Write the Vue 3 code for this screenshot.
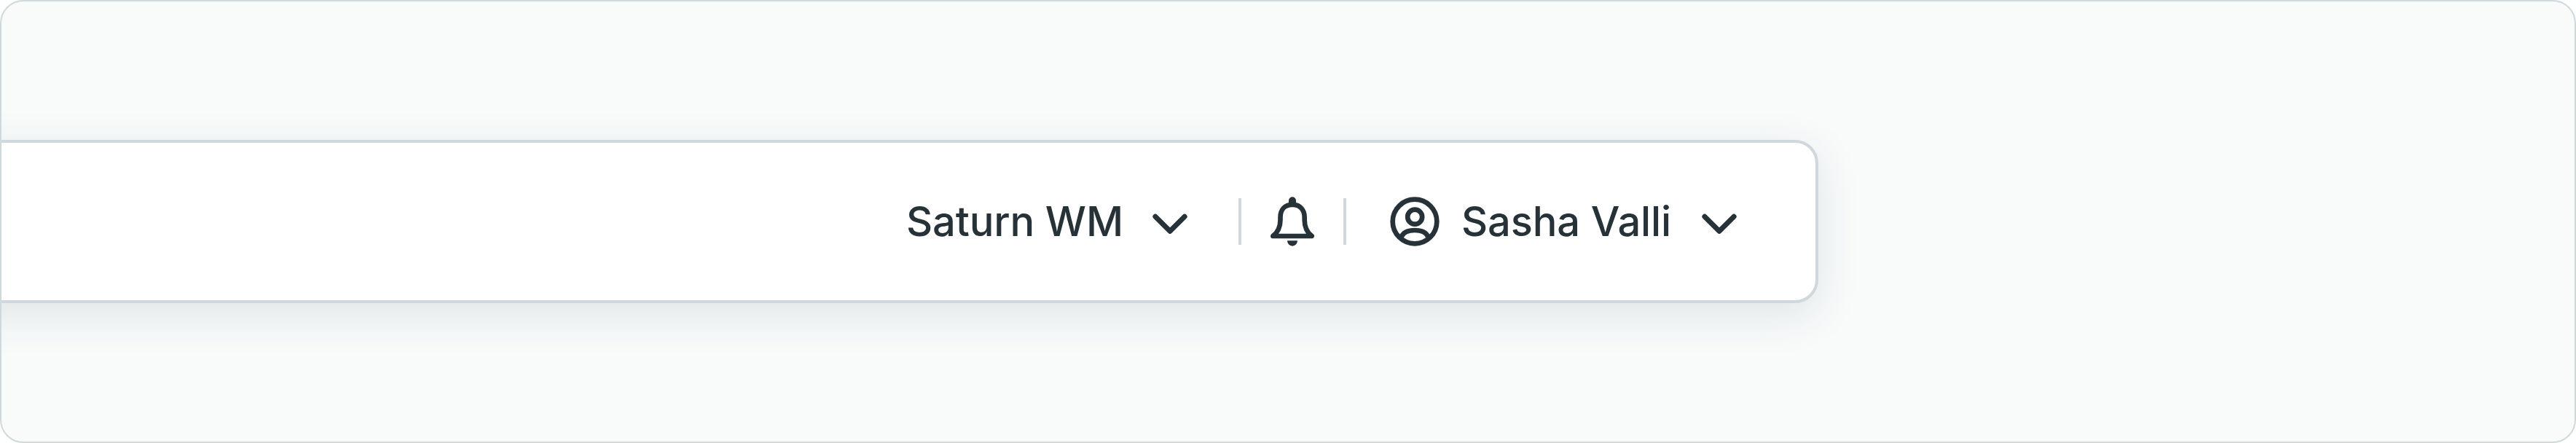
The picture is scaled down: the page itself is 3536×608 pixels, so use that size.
<script setup>
const workspace = 'Saturn WM'
const user = 'Sasha Valli'
</script>

<template>
  <main class="canvas">
    <header class="bar">
      <button class="menu">
        <span class="label workspace">{{ workspace }}</span>
        <svg class="chevron" viewBox="0 0 56 36"><path d="M7.9 7.2 28 27.3 48.1 7.2" /></svg>
      </button>
      <span class="divider"></span>
      <button class="bell-button" aria-label="Notifications">
        <svg class="bell" viewBox="246 54 192 216">
          <path class="line" d="M262 222C280 208 292.500 185 292.500 155V145C292.500 112 312 92.500 342 92.500S392 112 392 145V155C392 185 404 208 422 222Z" />
          <path class="solid" d="M327 88V76a15 15 0 0 1 30 0v12ZM321 241h42a21 22 0 0 1-42 0Z" />
        </svg>
      </button>
      <span class="divider"></span>
      <button class="menu account">
        <svg class="avatar" viewBox="78 53 216 216">
          <circle cx="186" cy="161" r="91" />
          <circle cx="186.500" cy="142" r="30" />
          <path d="M131 224C139 205 160 197 186 197S233 205 241 224" />
        </svg>
        <span class="label user">{{ user }}</span>
        <svg class="chevron" viewBox="0 0 56 36"><path d="M7.900 7.200 28 27.300 48.100 7.200" /></svg>
      </button>
    </header>
  </main>
</template>

<style>
body {
  background: #fff;
}
</style>

<style scoped>
.canvas {
  box-sizing: border-box;
  width: 3536px;
  height: 608px;
  padding-top: 190px;
  border: 2px solid #cfd8dd;
  border-radius: 32px;
  background: #f8fbfa;
  overflow: hidden;
}
.bar {
  box-sizing: border-box;
  display: flex;
  align-items: center;
  justify-content: flex-end;
  width: 2694px;
  height: 224px;
  margin-left: -200px;
  padding-right: 104px;
  border: 4px solid #cfd8dd;
  border-radius: 32px;
  background: #fff;
  box-shadow: 0 16px 60px rgba(48, 50, 80, 0.115);
}
button {
  display: flex;
  align-items: center;
  padding: 0;
  border: 0;
  background: none;
  color: #263238;
}
.menu {
  margin-right: 66px;
}
.account {
  margin: 0 0 0 58px;
}
.label {
  font: 500 56px/80px Inter, sans-serif;
  letter-spacing: -0.12px;
  text-align: left;
  white-space: nowrap;
}
.workspace {
  width: 334px;
}
.user {
  width: 326px;
  margin-left: 28px;
}
svg {
  display: block;
  flex: none;
}
.chevron {
  width: 56px;
  height: 36px;
  margin-top: 8px;
  fill: none;
  stroke: #263238;
  stroke-width: 7;
  stroke-linecap: round;
  stroke-linejoin: round;
}
.divider {
  width: 4px;
  height: 64px;
  background: #cfd8dd;
}
.bell-button {
  margin: 0 38px;
}
.bell {
  width: 64px;
  height: 72px;
}
.line,
.avatar {
  fill: none;
  stroke: #263238;
  stroke-width: 20;
  stroke-linejoin: round;
}
.solid {
  fill: #263238;
}
.avatar {
  width: 72px;
  height: 72px;
}
</style>
